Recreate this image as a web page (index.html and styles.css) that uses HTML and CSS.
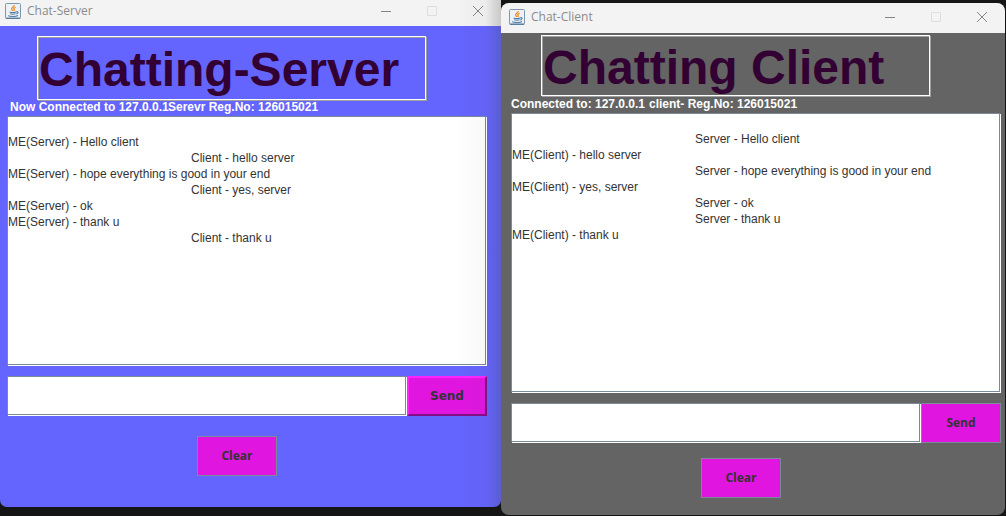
FILE: index.html
```
<!DOCTYPE html>
<html lang="en">
<head>
<meta charset="utf-8">
<title>Chat</title>
<link rel="stylesheet" href="styles.css">
</head>
<body>
<svg class="defs" aria-hidden="true">
  <symbol id="java" viewBox="0 0 16 16">
    <rect x=".5" y=".5" width="15" height="15" rx="1" fill="#eef2f5" stroke="#7d98ae"/>
    <path d="M1 15.2h14" stroke="#4f7797" stroke-width="1.2"/>
    <path d="M9.3 2c.5 1.700-3.300 2.500-2.600 4.200.2.600 1 1.100 1 1.900M10.600 4.300c-1.500.5-2.300 1.200-1.500 2.100.5.600.2 1.200-.4 1.700" fill="none" stroke="#ee8a2c" stroke-width="1.300"/>
    <path d="M4.600 8.900c1.500.6 5 .6 6.600 0M5.200 10.800c1.500.5 3.800.5 5.300 0M11.300 8.700c2.400-.5 2.200 1.800 0 2.300M3 12.600c2 1.200 8 1.200 10-.1" fill="none" stroke="#4a7ba3" stroke-width="1.100"/>
  </symbol>
  <symbol id="min" viewBox="0 0 10 10"><path d="M0 5.500h10" stroke="#858585"/></symbol>
  <symbol id="max" viewBox="0 0 10 10"><rect x=".5" y=".5" width="9" height="9" rx=".5" fill="none" stroke="#dedede"/></symbol>
  <symbol id="close" viewBox="0 0 10 10"><path d="M0 0l10 10M10 0L0 10" stroke="#858585"/></symbol>
</svg>
<main class="desktop">
  <section class="window server">
    <header class="titlebar">
      <svg class="app-icon" aria-hidden="true"><use href="#java"/></svg>
      <span class="caption">Chat-Server</span>
      <button class="control" type="button" aria-label="Minimize"><svg><use href="#min"/></svg></button>
      <button class="control" type="button" aria-label="Maximize" disabled><svg><use href="#max"/></svg></button>
      <button class="control" type="button" aria-label="Close"><svg><use href="#close"/></svg></button>
    </header>
    <div class="content">
      <h1 class="heading">Chatting-Server</h1>
      <div class="status"><span class="status-host">Now Connected to 127.0.0.1</span><span>Serevr Reg.No: 126015021</span></div>
      <div class="log" role="log">
        <p class="line">ME(Server) - Hello client</p>
        <p class="line remote">Client - hello server</p>
        <p class="line">ME(Server) - hope everything is good in your end</p>
        <p class="line remote">Client - yes, server</p>
        <p class="line">ME(Server) - ok</p>
        <p class="line">ME(Server) - thank u</p>
        <p class="line remote">Client - thank u</p>
      </div>
      <form class="compose">
        <input class="message" type="text" aria-label="Server message">
        <button class="action raised" type="button">Send</button>
      </form>
      <button class="action clear" type="button">Clear</button>
    </div>
  </section>
  <section class="window client">
    <header class="titlebar">
      <svg class="app-icon" aria-hidden="true"><use href="#java"/></svg>
      <span class="caption">Chat-Client</span>
      <button class="control" type="button" aria-label="Minimize"><svg><use href="#min"/></svg></button>
      <button class="control" type="button" aria-label="Maximize" disabled><svg><use href="#max"/></svg></button>
      <button class="control" type="button" aria-label="Close"><svg><use href="#close"/></svg></button>
    </header>
    <div class="content">
      <h1 class="heading">Chatting Client</h1>
      <div class="status"><span class="status-host">Connected to: 127.0.0.1</span><span>client- Reg.No: 126015021</span></div>
      <div class="log" role="log">
        <p class="line remote">Server - Hello client</p>
        <p class="line">ME(Client) - hello server</p>
        <p class="line remote">Server - hope everything is good in your end</p>
        <p class="line">ME(Client) - yes, server</p>
        <p class="line remote">Server - ok</p>
        <p class="line remote">Server - thank u</p>
        <p class="line">ME(Client) - thank u</p>
      </div>
      <form class="compose">
        <input class="message" type="text" aria-label="Client message">
        <button class="action" type="button">Send</button>
      </form>
      <button class="action clear" type="button">Clear</button>
    </div>
  </section>
</main>
</body>
</html>
```
FILE: styles.css
```
* { box-sizing: border-box; }
body {
  margin: 0;
  background: #151515;
  font: 12px/16px "Liberation Sans", Arial, sans-serif;
  color: #333;
}
.defs { display: none; }
.desktop {
  display: grid;
  grid-template-columns: 501fr 505fr;
  min-height: 100vh;
}
.window {
  display: flex;
  flex-direction: column;
  overflow: hidden;
}
.server {
  margin-bottom: 9px;
  border-radius: 0 0 7px 7px;
  background: #6464ff;
  position: relative;
}
/* shade cast by the window in front */
.server::after {
  content: "";
  position: absolute;
  inset: 0 0 0 auto;
  width: 44px;
  pointer-events: none;
  background: linear-gradient(to right, transparent, rgba(70, 70, 70, .04) 65%, rgba(70, 70, 70, .25));
}
.client {
  margin: 3px 1px 1px 0;
  border-radius: 8px;
  background: #646464;
}
.titlebar {
  display: flex;
  align-items: center;
  height: 30px;
  background: #f3f3f3;
  padding-left: 8px;
}
.server .titlebar {
  height: 26px;
  padding: 0 0 5px 5px;
}
.client .titlebar { padding-bottom: 2px; }
.app-icon { width: 16px; height: 16px; }
.caption {
  flex: 1;
  margin-left: 6px;
  font-family: "Open Sans", "Noto Sans", sans-serif;
  color: #8b8b8b;
}
.control {
  display: grid;
  place-items: center;
  width: 46px;
  height: 20px;
  padding: 0;
  border: 0;
  background: none;
}
.control svg { width: 10px; height: 10px; }
.content {
  flex: 1;
  display: flex;
  flex-direction: column;
  padding: 2px 4px 17px 10px;
}
.server .content { padding: 10px 14px 31px 7px; }
.heading {
  width: 389px;
  max-width: calc(100% - 30px);
  margin: 0 0 1px 30px;
  padding: 4px 1px 0;
  border: 1px solid #fff;
  box-shadow: 1px 1px 0 #a0a0a0, inset 1px 1px 0 #a0a0a0;
  font-size: 48px;
  line-height: 55px;
  color: #330033;
}
.server .heading {
  margin-bottom: 0;
  line-height: 58px;
}
.status {
  display: flex;
  padding-bottom: 2px;
  font-weight: bold;
  line-height: 14px;
  white-space: nowrap;
  color: #fff;
}
.server .status { padding-left: 3px; }
.status-host { width: 138px; }
.server .status-host { width: 158px; }
.log, .message {
  border: 1px solid #7a8a99;
  background: #fff;
  box-shadow: 1px 1px 0 #fff, inset 1px 0 0 #fff;
  margin-right: 1px;
}
.log {
  flex: 1;
  margin-bottom: 11px;
  padding-top: 17px;
}
.line { margin: 0; }
.remote { padding-left: 183px; }
.compose { display: flex; }
.message {
  flex: 1;
  min-width: 0;
  height: 39px;
  padding: 0 2px;
  border-radius: 0;
}
.action {
  width: 80px;
  height: 40px;
  padding: 0;
  border: 1px solid #7a8a99;
  background: #e016e0;
  color: #333;
  font: bold 12px/16px "Open Sans", "Noto Sans", sans-serif;
}
.raised {
  border: 2px solid;
  border-color: #ff24ff #850d85 #850d85 #ff24ff;
  font: bold 12px/16px "DejaVu Sans", sans-serif;
}
.clear { margin: 15px 0 0 190px; }
.server .clear { margin-top: 20px; }
```
